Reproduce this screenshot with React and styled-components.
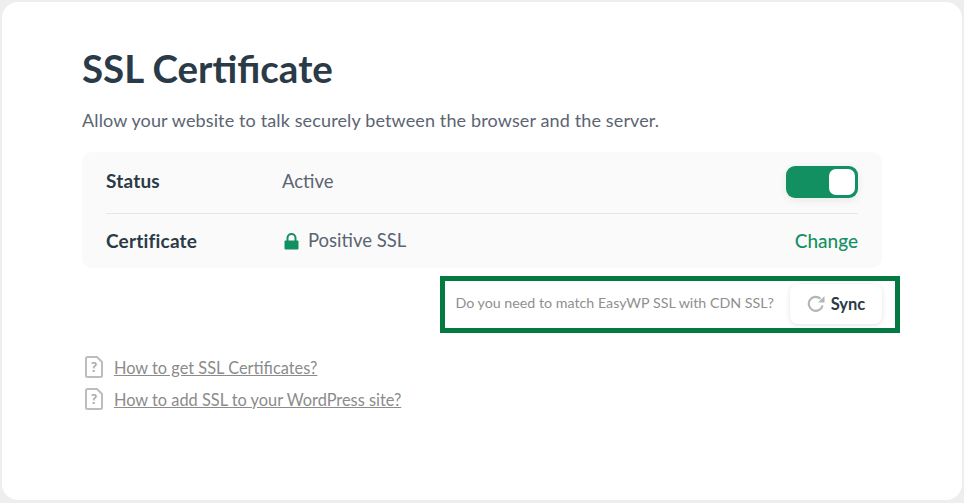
import React from 'react'
import styled, {createGlobalStyle} from 'styled-components'

const Global = createGlobalStyle`
html, body {
  margin: 0;
  padding: 0;
  background: #eeeeee;
}
body {
  font-family: "Lato", "Liberation Sans", sans-serif;
}
`;

const Page = styled.div`
width: 964px;
height: 503px;
padding: 2px 2px 3px 2px;
box-sizing: border-box;
overflow: hidden;
`;

const Card = styled.main`
height: 100%;
box-sizing: border-box;
background: #fff;
border-radius: 16px;
padding: 44px 80px 0 80px;
`;

const Heading = styled.h1`
margin: 0;
font-size: 38.5px;
line-height: 44px;
font-weight: 700;
color: #2a3a47;
`;

const Lead = styled.p`
margin: 18px 0 0;
font-size: 18px;
line-height: 24px;
color: #5b6472;
letter-spacing: .13px;
`;

const Panel = styled.section`
margin-top: 20px;
height: 116px;
box-sizing: border-box;
padding: 0 24px;
background: #fafafa;
border-radius: 10px;
`;

const Row = styled.div`
display: grid;
grid-template-columns: 176px 1fr auto;
align-items: center;
height: ${p => p.$height}px;
border-bottom: ${p => p.$divider ? '1px solid #e6e6e6' : 'none'};
`;

const Label = styled.span`
font-size: 19px;
line-height: 24px;
font-weight: 700;
letter-spacing: .2px;
color: #2a3a47;
margin-top: ${p => p.$shift || 0}px;
`;

const Value = styled.span`
display: flex;
align-items: center;
gap: 9px;
font-size: 18.5px;
line-height: 24px;
color: #5b6472;
margin-top: ${p => p.$shift || 0}px;
`;

const Toggle = styled.div`
display: flex;
justify-content: flex-end;
width: 72px;
height: 32px;
box-sizing: border-box;
padding: 3px;
margin-top: -2px;
background: #139062;
border-radius: 9px;
box-shadow: 0 2px 8px rgba(0, 0, 0, .08);
`;

const Knob = styled.div`
width: 26px;
height: 26px;
background: #fff;
border-radius: 7px;
`;

const ChangeLink = styled.a`
font-size: 19px;
line-height: 24px;
font-weight: 500;
color: #139062;
margin-top: -1px;
`;

const LockBox = styled.span`
display: flex;
margin: 3px 0 0 2px;
`;

const SyncRow = styled.div`
position: relative;
display: flex;
justify-content: flex-end;
align-items: center;
gap: 16px;
margin-top: 16px;
height: 40px;
`;

const Highlight = styled.div`
position: absolute;
top: -8px;
right: -18px;
width: 460px;
height: 57px;
box-sizing: border-box;
border: 5px solid #047a42;
pointer-events: none;
`;

const Hint = styled.span`
font-size: 14.25px;
color: #8f8f8f;
margin-top: -4px;
`;

const SyncButton = styled.button`
display: flex;
align-items: center;
justify-content: center;
gap: 6px;
width: 92px;
height: 40px;
padding: 0;
border: none;
background: #fff;
border-radius: 8px;
box-shadow: 0 1px 5px rgba(0, 0, 0, .12);
font-family: inherit;
font-size: 16.5px;
font-weight: 700;
color: #2a3a47;
`;

const Links = styled.div`
display: flex;
flex-direction: column;
gap: 8px;
margin-top: 31px;
`;

const HelpItem = styled.div`
display: flex;
align-items: center;
gap: 11px;
height: 24px;
padding-left: 3px;
`;

const HelpLink = styled.a`
font-size: 16.35px;
color: #8b8b8b;
text-decoration: underline;
`;

const LockIcon = () => (
  <LockBox>
    <svg width="15" height="17" viewBox="0 0 15 17">
      <path d="M3.5 8V5a4 4 0 0 1 8 0v3" fill="none" stroke="#139062" strokeWidth="2" />
      <rect x="0.5" y="7.5" width="14" height="9" rx="1" fill="#139062" />
    </svg>
  </LockBox>
)

const SyncIcon = () => (
  <svg width="18" height="18" viewBox="0 0 18 18" fill="none">
    <path d="M15.6 10.5A7 7 0 1 1 13.6 3.7" stroke="#b5b5b5" strokeWidth="2.2" />
    <path d="M17.5 1v6.4h-6.4z" fill="#b5b5b5" />
  </svg>
)

const DocIcon = () => (
  <svg width="18" height="22" viewBox="0 0 18 22" fill="none">
    <path d="M2.5 1h9.5L17 6V19.5a1.5 1.5 0 0 1-1.5 1.5h-13A1.5 1.5 0 0 1 1 19.5v-17A1.5 1.5 0 0 1 2.5 1z" stroke="#bdbdbd" strokeWidth="2" />
    <text x="9" y="16" textAnchor="middle" fontSize="14" fontWeight="700" fontFamily="Lato, sans-serif" fill="#a8a8a8">?</text>
  </svg>
)

const helpLinks = ['How to get SSL Certificates?', 'How to add SSL to your WordPress site?']

export default function App() {
  return (
    <Page>
      <Global />
      <Card>
        <Heading>SSL Certificate</Heading>
        <Lead>Allow your website to talk securely between the browser and the server.</Lead>
        <Panel>
          <Row $height={61} $divider>
            <Label $shift={-3}>Status</Label>
            <Value $shift={-3}>Active</Value>
            <Toggle><Knob /></Toggle>
          </Row>
          <Row $height={55}>
            <Label $shift={-1}>Certificate</Label>
            <Value $shift={-3}><LockIcon />Positive SSL</Value>
            <ChangeLink>Change</ChangeLink>
          </Row>
        </Panel>
        <SyncRow>
          <Hint>Do you need to match EasyWP SSL with CDN SSL?</Hint>
          <SyncButton><SyncIcon />Sync</SyncButton>
          <Highlight />
        </SyncRow>
        <Links>
          {helpLinks.map(text => (
            <HelpItem key={text}>
              <DocIcon />
              <HelpLink>{text}</HelpLink>
            </HelpItem>
          ))}
        </Links>
      </Card>
    </Page>
  )
}
